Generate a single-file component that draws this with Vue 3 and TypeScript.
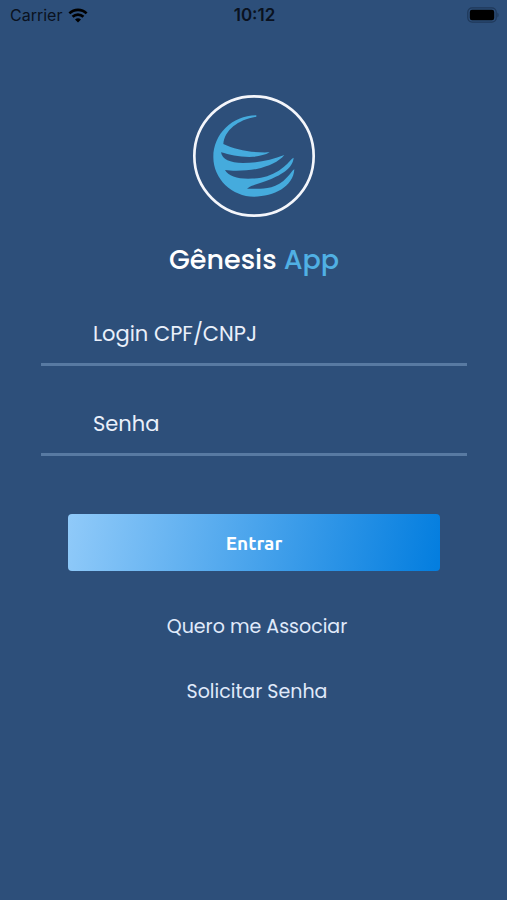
<script setup lang="ts">
import { ref } from 'vue'

const login = ref<string>('')
const password = ref<string>('')
</script>

<template>
  <div class="screen">
    <header class="status">
      <div class="carrier">
        <span>Carrier</span>
        <svg class="wifi" viewBox="0 0 20 15" aria-hidden="true">
          <path d="M1.4 5.4a12.3 12.3 0 0 1 17.2 0" />
          <path d="M4.6 8.8a7.8 7.8 0 0 1 10.8 0" />
          <path class="wifi-dot" d="M10 14.6 7 11.6a4.3 4.3 0 0 1 6 0z" />
        </svg>
      </div>
      <time class="clock">10:12</time>
      <svg class="battery" viewBox="0 0 32 16" aria-hidden="true">
        <rect class="battery-shell" x="0.8" y="0.8" width="28.4" height="14.4" rx="4.4" />
        <rect x="2.8" y="2.8" width="24.4" height="10.4" rx="2.2" />
        <path class="battery-tip" d="M30.4 5.4c1.6 1 1.6 4.2 0 5.2z" />
      </svg>
    </header>

    <main class="content">
      <svg class="logo" viewBox="27 27 366 366" role="img" aria-label="Gênesis">
        <circle cx="210" cy="210" r="179" />
        <path
          d="M217 88C145 88 88 145 88 213C88 280 145 332 210 332C270 332 328 302 331 250C325 252 318 268 298 285C282 298 266 304 250 306C225 309 205 309 189 308C205 296 228 292 246 285C290 268 326 248 329 215C322 217 314 231 300 242C280 259 256 270 231 275C180 283 135 276 123 252C150 256 188 254 218 249C254 241 285 227 301 207C263 222 220 231 177 231C137 230 115 221 111 199C135 206 164 213 196 213C222 212 241 208 257 199C205 201 155 192 118 174C122 132 162 101 217 92Z"
        />
      </svg>
      <h1 class="title">Gênesis <span>App</span></h1>

      <form class="form" @submit.prevent>
        <input v-model="login" class="field" type="text" placeholder="Login CPF/CNPJ" aria-label="Login CPF/CNPJ" />
        <input v-model="password" class="field" type="password" placeholder="Senha" aria-label="Senha" />
        <button class="submit" type="submit">Entrar</button>
      </form>

      <nav class="links">
        <a href="#associar">Quero me Associar</a>
        <a href="#senha">Solicitar Senha</a>
      </nav>
    </main>
  </div>
</template>

<style>
body {
  margin: 0;
  background: #2d4f7a;
}
</style>

<style scoped>
.screen {
  min-height: 100vh;
  box-sizing: border-box;
  background: #2d4f7a;
  color: #fff;
  font-family: Poppins, Inter, "Open Sans", sans-serif;
}

.status {
  display: grid;
  grid-template-columns: 1fr auto 1fr;
  align-items: center;
  height: 30px;
  padding: 0 8px 0 10px;
  color: #0a1220;
  font-family: Inter, sans-serif;
  font-size: 16px;
}

.carrier {
  display: flex;
  align-items: center;
  gap: 6px;
}

.wifi {
  width: 20px;
  height: 15px;
  fill: none;
  stroke: #000;
  stroke-width: 2.7;
}

.wifi .wifi-dot {
  fill: #000;
  stroke: none;
}

.clock {
  font-size: 17px;
  font-weight: 600;
}

.battery {
  justify-self: end;
  width: 32px;
  height: 16px;
}

.battery-shell {
  fill: none;
  stroke: #1f3859;
  stroke-width: 1.2;
}

.battery-tip {
  fill: #1f3859;
}

.content {
  display: flex;
  flex-direction: column;
  align-items: center;
  padding: 65px 40px 40px 41px;
}

.logo {
  width: 122px;
  height: 122px;
}

.logo circle {
  fill: none;
  stroke: #f4f6fb;
  stroke-width: 8;
}

.logo path {
  fill: #45abdd;
}

.title {
  margin: 24px 0 0;
  font-size: 27px;
  line-height: 38px;
  font-weight: 500;
}

.title span {
  color: #50b0e4;
}

.form {
  display: flex;
  flex-direction: column;
  align-self: stretch;
  gap: 24px;
  margin-top: 21px;
}

.field {
  box-sizing: border-box;
  width: 100%;
  height: 66px;
  padding: 4px 52px 0;
  border: 0;
  border-bottom: 3px solid #587aa2;
  border-radius: 0;
  outline: 0;
  background: transparent;
  color: #f0f4fb;
  font-family: inherit;
  font-size: 21px;
}

.field::placeholder {
  color: #eaf0fa;
  opacity: 1;
}

.submit {
  height: 57px;
  margin: 34px 27px 0;
  border: 0;
  border-radius: 4px;
  background: linear-gradient(100deg, #90caf9, #047edf 99%);
  color: #fff;
  font-family: Ubuntu, "Noto Sans", sans-serif;
  font-size: 19px;
  font-weight: 700;
}

.links {
  display: flex;
  flex-direction: column;
  align-items: center;
  gap: 35px;
  margin-top: 41px;
  padding-left: 6px;
}

.links a {
  color: #e0eafa;
  font-size: 19px;
  line-height: 30px;
  text-decoration: none;
}
</style>
